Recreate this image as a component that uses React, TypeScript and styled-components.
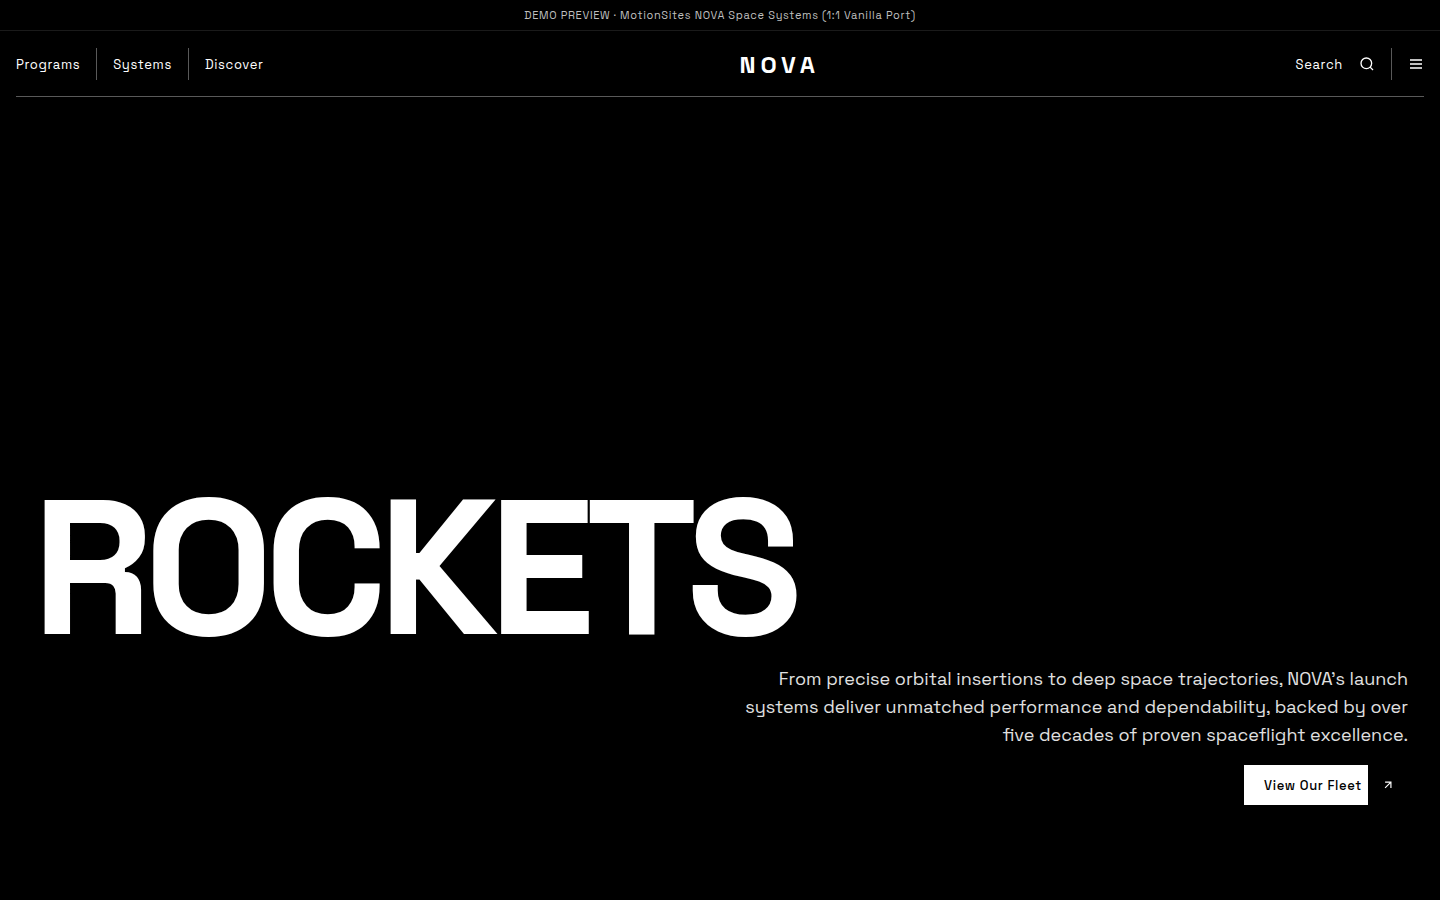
import React from "react";
import styled, { createGlobalStyle } from "styled-components";

const GlobalStyle = createGlobalStyle`
  *, *::before, *::after { box-sizing: border-box; }
  body {
    margin: 0;
    background: #000;
    color: #fff;
    font-family: "Space Grotesk", Inter, "Liberation Sans", sans-serif;
  }
`;

const Page = styled.div`
  min-height: 100vh;
  display: flex;
  flex-direction: column;
`;

const Banner = styled.aside`
  padding: 7px 16px;
  border-bottom: 1px solid #1a1a1a;
  color: #bfbfbf;
  font-size: 11px;
  line-height: 16px;
  letter-spacing: 0.06em;
  text-align: center;
`;

const Header = styled.header`
  display: flex;
  align-items: center;
  justify-content: space-between;
  margin: 0 16px;
  padding: 17px 0 16px;
  border-bottom: 1px solid #595959;
`;

const Group = styled.nav`
  display: flex;
  align-items: center;
  gap: 16px;
`;

const Divider = styled.span`
  width: 1px;
  height: 32px;
  background: #595959;
`;

const NavLink = styled.a`
  padding-top: 1px;
  color: #fff;
  font-size: 13px;
  line-height: 21px;
  letter-spacing: 0.05em;
  text-decoration: none;
`;

const Logo = styled.a`
  padding-top: 1px;
  color: #fff;
  font-size: 24px;
  font-weight: 700;
  line-height: 31px;
  letter-spacing: 0.2em;
  text-decoration: none;
`;

const IconButton = styled.button`
  display: flex;
  padding: 0;
  border: 0;
  background: none;
  color: #fff;
  cursor: pointer;
`;

const Icon = styled.svg.attrs({ viewBox: "0 0 24 24", "aria-hidden": true })<{ $size: number }>`
  display: block;
  width: ${(p) => p.$size}px;
  height: ${(p) => p.$size}px;
  fill: none;
  stroke: currentColor;
  stroke-width: 2;
`;

const Hero = styled.main`
  flex: 1;
  display: flex;
  flex-direction: column;
  justify-content: flex-end;
  padding: 0 32px 95px;
`;

const Title = styled.h1`
  margin: 0 0 16px;
  font-size: 192px;
  font-weight: 700;
  line-height: 163px;
  letter-spacing: -0.05em;
`;

const Details = styled.div`
  display: flex;
  flex-direction: column;
  align-items: flex-end;
  gap: 16px;
`;

const Lead = styled.p`
  max-width: 672px;
  margin: 0;
  color: #e0e0e0;
  font-size: 18px;
  line-height: 28px;
  text-align: right;
`;

const FleetButton = styled.button`
  display: flex;
  align-items: center;
  padding: 0;
  border: 0;
  background: none;
  color: #fff;
  font-family: inherit;
  cursor: pointer;
`;

const FleetLabel = styled.span`
  width: 124px;
  padding: 11px 0 9px 20px;
  background: #fff;
  color: #000;
  font-size: 13px;
  font-weight: 500;
  line-height: 20px;
  letter-spacing: 0.05em;
  text-align: left;
  white-space: nowrap;
`;

const FleetIcon = styled.span`
  display: grid;
  place-items: center;
  width: 40px;
  height: 40px;
`;

export default function App() {
  return (
    <Page>
      <GlobalStyle />
      <Banner>DEMO PREVIEW · MotionSites NOVA Space Systems (1:1 Vanilla Port)</Banner>
      <Header>
        <Group aria-label="Main">
          <NavLink href="#programs">Programs</NavLink>
          <Divider />
          <NavLink href="#systems">Systems</NavLink>
          <Divider />
          <NavLink href="#discover">Discover</NavLink>
        </Group>
        <Logo href="#home">NOVA</Logo>
        <Group aria-label="Tools">
          <NavLink href="#search">Search</NavLink>
          <IconButton aria-label="Search">
            <Icon $size={16}>
              <circle cx="11" cy="11" r="8" />
              <path d="m21 21-4.3-4.3" />
            </Icon>
          </IconButton>
          <Divider />
          <IconButton aria-label="Menu">
            <Icon $size={16}>
              <path d="M3 6h18M3 12h18M3 18h18" />
            </Icon>
          </IconButton>
        </Group>
      </Header>
      <Hero>
        <Title>ROCKETS</Title>
        <Details>
          <Lead>
            From precise orbital insertions to deep space trajectories, NOVA’s launch systems deliver
            unmatched performance and dependability, backed by over five decades of proven
            spaceflight excellence.
          </Lead>
          <FleetButton>
            <FleetLabel>View Our Fleet</FleetLabel>
            <FleetIcon>
              <Icon $size={14}>
                <path d="M7 7h10v10M7 17 17 7" />
              </Icon>
            </FleetIcon>
          </FleetButton>
        </Details>
      </Hero>
    </Page>
  );
}
